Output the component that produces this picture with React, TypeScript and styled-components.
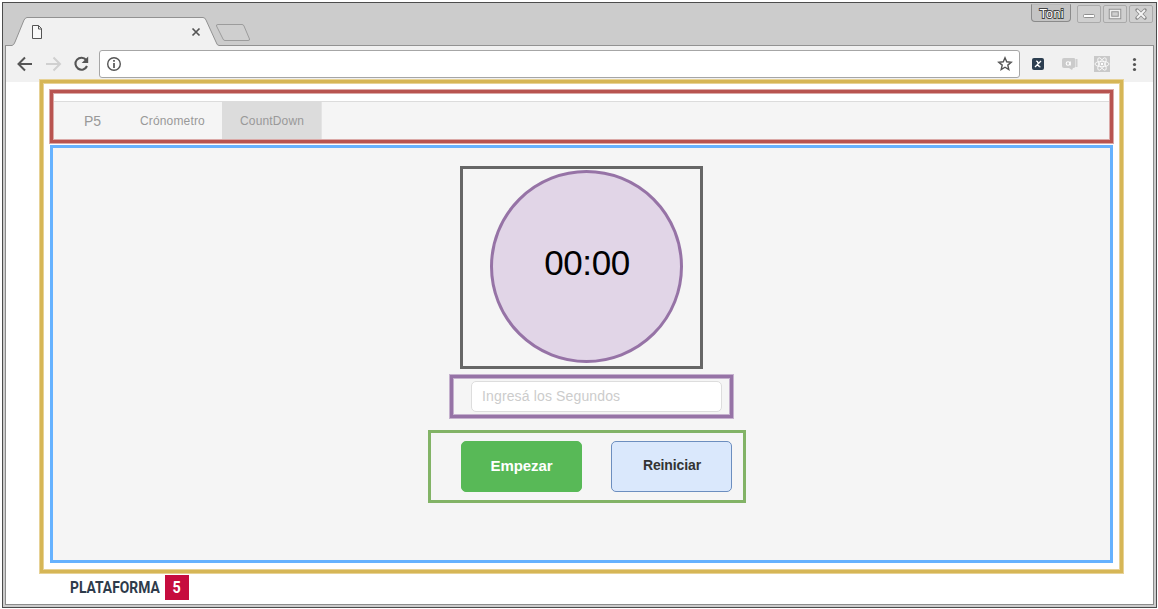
import React from "react";
import styled, { createGlobalStyle } from "styled-components";

const Global = createGlobalStyle`
  * { box-sizing: border-box; }
  body { margin: 0; background: #fff; overflow: hidden; font-family: "Liberation Sans", Arial, sans-serif; }
  button, input { font-family: inherit; margin: 0; }
`;

const Desktop = styled.div`
  width: 1158px;
  height: 609px;
  padding: 2px 1px 1px 2px;
`;

const BrowserWindow = styled.div`
  height: 606px;
  border: 1px solid #4c4c4c;
  background: #ccc;
  display: flex;
  flex-direction: column;
`;

const TitleBar = styled.header`
  position: relative;
  height: 43px;
  flex: none;
  display: flex;
  justify-content: space-between;
`;

const TabStrip = styled.svg`
  display: block;
  width: 1153px;
  height: 43px;
`;

const WindowControls = styled.div`
  position: absolute;
  top: 1px;
  right: 3px;
  display: flex;
  align-items: flex-start;
`;

const UserBadge = styled.div`
  width: 40px;
  height: 18px;
  margin-right: 4px;
  border: 1px solid #8a8a8a;
  border-top-color: #bbb;
  border-radius: 0 0 4px 4px;
  background: #c4c4c4;
  display: flex;
  justify-content: center;
`;

const WindowButton = styled.button`
  width: 24px;
  height: 18px;
  padding: 0;
  margin: 1px 0 0 2px;
  border: 1px solid #aaa;
  border-radius: 2px;
  background: #cfcfcf;
  svg { display: block; }
`;

const Frame = styled.div`
  margin: 0 2px;
  height: 559px;
  border: 1px solid #8c8c8c;
  border-top: 0;
  background: #fff;
`;

const Toolbar = styled.nav`
  height: 36px;
  padding: 4px 8px 5px 10px;
  background: #f1f1f1;
  display: flex;
  align-items: center;
`;

const ToolIcon = styled.svg<{ $gap: number }>`
  flex: none;
  margin-right: ${(p) => p.$gap}px;
`;

const AddressBar = styled.div`
  width: 921px;
  height: 28px;
  margin-right: 11px;
  padding: 0 6px;
  border: 1px solid #a6a6a6;
  border-radius: 3px;
  background: #fff;
  display: flex;
  align-items: center;
  justify-content: space-between;
`;

const Page = styled.main`
  position: relative;
  padding-left: 34px;
  margin-top: -2px;
`;

const AppFrame = styled.section`
  width: 1083px;
  height: 493px;
  padding: 7px;
  border: 3px solid #d6b656;
  box-shadow: 0 0 0 1px #e7d296, inset 0 0 0 1px #e7d296;
  background: #fff;
`;

const NavFrame = styled.div`
  width: 1063px;
  height: 53px;
  padding: 8px 1px 0;
  border: 3px solid #b85450;
  box-shadow: 0 0 0 1px #dba9a7, inset 0 0 0 1px #dba9a7;
`;

const NavBar = styled.div`
  height: 38px;
  border-top: 1px solid #dcdcdc;
  background: #f5f5f5;
  display: flex;
  color: #999;
`;

const NavItem = styled.a<{ $active?: boolean; $brand?: boolean }>`
  height: 37px;
  padding: ${(p) => (p.$brand ? "0 21px 0 30px" : "0 17px 0 18px")};
  border: solid ${(p) => (p.$active ? "#e4e4e4" : "transparent")};
  border-width: 0 1px 0 0;
  background: ${(p) => (p.$active ? "#dcdcdc" : "transparent")};
  font-size: ${(p) => (p.$brand ? 14 : 12)}px;
  letter-spacing: ${(p) => (p.$brand ? 0 : 0.15)}px;
  line-height: 39px;
  white-space: nowrap;
  width: ${(p) => (p.$brand ? 68 : 100)}px;
`;

const TimerPanel = styled.div`
  width: 1063px;
  height: 418px;
  margin-top: 2px;
  padding: 18px 0 0 375px;
  border: 3px solid #66b2ff;
  background: #f5f5f5;
`;

const ClockFrame = styled.div`
  width: 243px;
  height: 203px;
  margin-left: 32px;
  padding: 1px 0 0 27px;
  border: 3px solid #666;
`;

const Dial = styled.div`
  width: 193px;
  height: 193px;
  padding: 0 0 8px 1px;
  border: 3px solid #9673a6;
  border-radius: 50%;
  background: #e1d5e7;
  display: flex;
  align-items: center;
  justify-content: center;
  color: #000;
  font-size: 35px;
  letter-spacing: -0.4px;
`;

const InputFrame = styled.div`
  width: 283px;
  height: 43px;
  margin: 6px 0 0 22px;
  padding: 3px 0 0 18px;
  border: 3px solid #9673a6;
  box-shadow: 0 0 0 1px #c5b1ce, inset 0 0 0 1px #c5b1ce;
`;

const SecondsInput = styled.input`
  display: block;
  width: 251px;
  height: 31px;
  padding: 0 10px 2px;
  border: 1px solid #ddd;
  border-radius: 5px;
  background: #fff;
  font-size: 14px;
  letter-spacing: 0.14px;
  &::placeholder { color: #ccc; opacity: 1; }
`;

const ActionsFrame = styled.div`
  width: 318px;
  height: 73px;
  margin-top: 12px;
  padding: 8px 0 0 30px;
  border: 3px solid #82b366;
  display: flex;
  align-items: flex-start;
  gap: 29px;
`;

const ActionButton = styled.button<{ $primary?: boolean }>`
  width: 121px;
  height: 51px;
  padding: ${(p) => (p.$primary ? "0 0 2px" : "0 0 3px 1px")};
  border: 1px solid ${(p) => (p.$primary ? "#58b957" : "#6c8ebf")};
  border-radius: 5px;
  background: ${(p) => (p.$primary ? "#58b957" : "#dae8fc")};
  color: ${(p) => (p.$primary ? "#fff" : "#333")};
  font-size: ${(p) => (p.$primary ? 15 : 14)}px;
  font-weight: bold;
  letter-spacing: -0.1px;
`;

const Brand = styled.footer`
  display: flex;
  align-items: center;
  margin: 2px 0 0 30px;
  height: 25px;
  font: bold 16px/25px Roboto, sans-serif;
  color: #2e3b4b;
`;

const BrandName = styled.div`
  width: 95px;
  span { display: inline-block; transform: scaleX(0.865); transform-origin: left; }
`;

const BrandNumber = styled.div`
  width: 24px;
  height: 25px;
  background: #c60c3e;
  color: #fff;
  text-align: center;
  span { display: inline-block; transform: scaleX(0.9); }
`;

export default function App() {
  return (
    <>
      <Global />
      <Desktop>
        <BrowserWindow>
          <TitleBar>
            <TabStrip viewBox="3 3 1153 43">
              <path d="M5 46V45.5H12Q14 45 15 42L24 20Q25.5 17.500 27 17.500H203Q205 17.500 206 20L216 42Q217 45.500 219 45.500H1154V46Z" fill="#f1f1f1" />
              <path d="M5 45.500H12Q14 45 15 42L24 20Q25.500 17.500 27 17.500H203Q205 17.500 206 20L216 42Q217 45.500 219 45.500H1154" fill="none" stroke="#929292" />
              <path d="M218 24.500H242Q243.500 24.500 244 26L249.500 39Q250 40.500 248 40.500H225Q223.500 40.500 223 39L216.500 26Q216 24.500 218 24.500Z" fill="#cfcfcf" stroke="#9c9c9c" />
              <path d="M32.500 25.500H38.500L41.500 28.500V38.500H32.500ZM38.500 25.500V29H41.500" fill="#fff" fillOpacity=".5" stroke="#555" />
              <path d="M192.500 28.500L199.500 35.500M199.500 28.500L192.500 35.500" stroke="#555" strokeWidth="1.700" />
            </TabStrip>
            <WindowControls>
              <UserBadge>
                <svg width="36" height="16">
                  <text x="18.500" y="13" textAnchor="middle" fontSize="12.500" fill="#fff" stroke="#444" strokeWidth="1.800" paintOrder="stroke" textLength="24">Toni</text>
                </svg>
              </UserBadge>
              <WindowButton>
                <svg width="22" height="16"><rect x="5.500" y="8.500" width="11" height="3" rx="1" fill="#fff" stroke="#909090" /></svg>
              </WindowButton>
              <WindowButton>
                <svg width="22" height="16"><rect x="6.500" y="4.500" width="9" height="7" fill="none" stroke="#909090" strokeWidth="3.500" /><rect x="6.500" y="4.500" width="9" height="7" fill="none" stroke="#eee" strokeWidth="1.500" /></svg>
              </WindowButton>
              <WindowButton>
                <svg width="22" height="16"><path d="M7 4L15 12M15 4L7 12" stroke="#8a8a8a" strokeWidth="3.500" strokeLinecap="round" /><path d="M7 4L15 12M15 4L7 12" stroke="#f5f5f5" strokeWidth="1.900" /></svg>
              </WindowButton>
            </WindowControls>
          </TitleBar>
          <Frame>
            <Toolbar>
              <ToolIcon $gap={12} width="18" height="16" viewBox="0 0 18 16">
                <path d="M16 8H3M9 1.500L2.500 8L9 14.500" fill="none" stroke="#555" strokeWidth="2" />
              </ToolIcon>
              <ToolIcon $gap={10} width="16" height="16" viewBox="0 0 16 16">
                <path d="M0 8H13M7.500 1.500L14 8L7.500 14.500" fill="none" stroke="#d0d0d0" strokeWidth="2" />
              </ToolIcon>
              <ToolIcon $gap={9} width="18" height="18" viewBox="0 0 18 18">
                <path d="M14.200 5A6 6 0 1 0 15 11" fill="none" stroke="#555" strokeWidth="2.100" />
                <path d="M16.200 1.500V8H9.700Z" fill="#555" />
              </ToolIcon>
              <AddressBar>
                <svg width="16" height="16">
                  <circle cx="8" cy="8" r="6.300" fill="none" stroke="#555" strokeWidth="1.400" />
                  <path d="M8 4V5.800M8 7V12" stroke="#555" strokeWidth="1.700" />
                </svg>
                <svg width="16" height="16">
                  <path d="M8 1.800L9.700 5.800L14.200 6.200L10.800 9.100L11.800 13.500L8 11.200L4.200 13.500L5.200 9.100L1.800 6.200L6.300 5.800Z" fill="none" stroke="#555" strokeWidth="1.400" />
                </svg>
              </AddressBar>
              <ToolIcon $gap={16} width="14" height="14" viewBox="0 0 14 14">
                <rect x="1" y="1" width="12" height="12" rx="2" fill="#2c3e50" />
                <path d="M5 4L6.500 4.500L8 9.500L9.500 10M10 4L4 10" fill="none" stroke="#fff" strokeWidth="1.300" />
              </ToolIcon>
              <ToolIcon $gap={15} width="18" height="16" viewBox="0 0 18 16">
                <path d="M3 2H13Q14 2 14 3V11Q14 12 12 12L11 14L8 12H3Q1 12 1 10V4Q1 2 3 2Z" fill="#cbcbcb" />
                <path d="M15.500 3V11" stroke="#cfcfcf" strokeWidth="2" />
                <circle cx="7" cy="7.500" r="1.800" fill="none" stroke="#fff" strokeWidth="1.100" />
                <path d="M9.300 5.500V9.500" stroke="#fff" />
              </ToolIcon>
              <ToolIcon $gap={16} width="16" height="16" viewBox="0 0 16 16">
                <rect width="16" height="16" fill="#c9c9c9" />
                <g fill="none" stroke="#fff" strokeWidth=".8">
                  <ellipse cx="8" cy="8" rx="7" ry="2.700" />
                  <ellipse cx="8" cy="8" rx="7" ry="2.700" transform="rotate(60 8 8)" />
                  <ellipse cx="8" cy="8" rx="7" ry="2.700" transform="rotate(120 8 8)" />
                </g>
                <circle cx="8" cy="8" r="1.200" fill="#fff" />
              </ToolIcon>
              <ToolIcon $gap={0} width="16" height="16" viewBox="0 0 16 16">
                <g fill="#555"><circle cx="8.500" cy="3.500" r="1.600" /><circle cx="8.500" cy="8.500" r="1.600" /><circle cx="8.500" cy="13.500" r="1.600" /></g>
              </ToolIcon>
            </Toolbar>
            <Page>
              <AppFrame>
                <NavFrame>
                  <NavBar>
                    <NavItem $brand>P5</NavItem>
                    <NavItem>Crónometro</NavItem>
                    <NavItem $active>CountDown</NavItem>
                  </NavBar>
                </NavFrame>
                <TimerPanel>
                  <ClockFrame>
                    <Dial>00:00</Dial>
                  </ClockFrame>
                  <InputFrame>
                    <SecondsInput placeholder="Ingresá los Segundos" />
                  </InputFrame>
                  <ActionsFrame>
                    <ActionButton $primary>Empezar</ActionButton>
                    <ActionButton>Reiniciar</ActionButton>
                  </ActionsFrame>
                </TimerPanel>
              </AppFrame>
              <Brand>
                <BrandName><span>PLATAFORMA</span></BrandName>
                <BrandNumber><span>5</span></BrandNumber>
              </Brand>
            </Page>
          </Frame>
        </BrowserWindow>
      </Desktop>
    </>
  );
}
